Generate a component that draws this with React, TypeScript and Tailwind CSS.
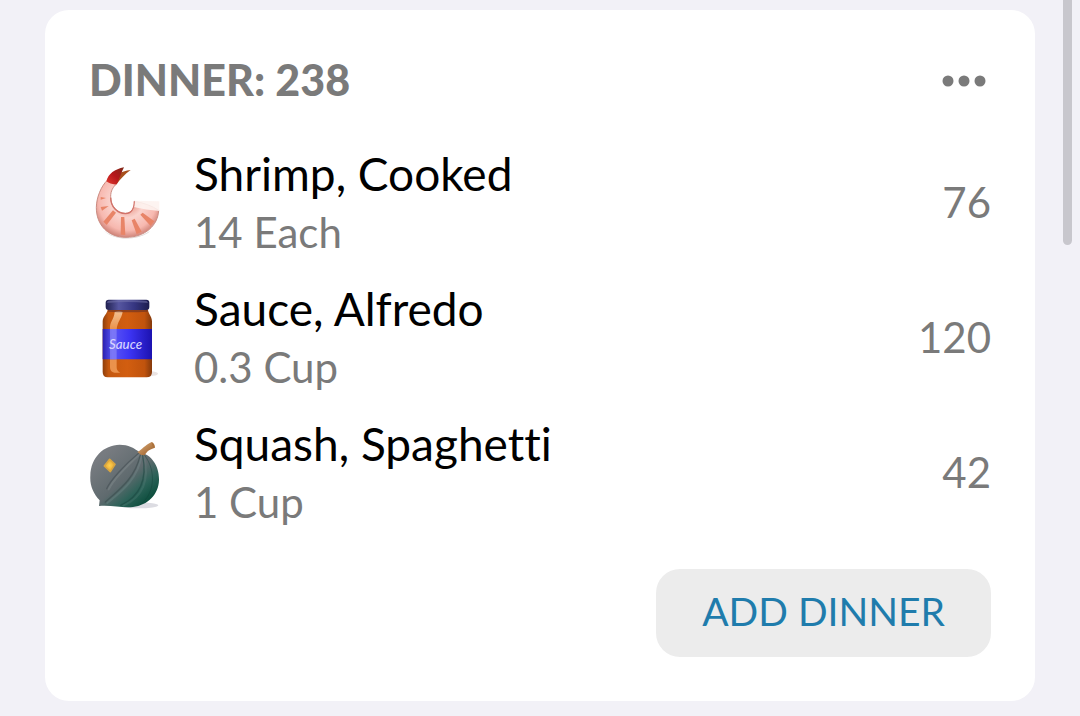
import type { ReactNode } from "react";

function ShrimpIcon() {
  return (
    <svg viewBox="30 24 210 240" className="h-20 w-[70px]" aria-hidden="true">
      <defs>
        <radialGradient id="shrimp-body" gradientUnits="userSpaceOnUse" cx="142" cy="140" r="108">
          <stop offset="0.25" stopColor="#efaba0" />
          <stop offset="0.45" stopColor="#fad3cd" />
          <stop offset="0.8" stopColor="#f7b8af" />
          <stop offset="1" stopColor="#cf8378" />
        </radialGradient>
        <linearGradient id="shrimp-tail" x1="0" y1="1" x2="1" y2="0">
          <stop offset="0" stopColor="#e0392f" />
          <stop offset="0.5" stopColor="#b5161a" />
          <stop offset="1" stopColor="#7d2a18" />
        </linearGradient>
        <clipPath id="shrimp-clip">
          <path d="M82 76 C64 92 49 128 49 158 C49 210 84 247 138 247 C194 247 234 212 236 166 C216 152 188 143 164 139 C164 158 156 174 136 175 C110 174 92 154 92 124 C92 108 99 96 110 86 Z" />
        </clipPath>
      </defs>
      <path d="M66 222 C96 254 166 258 210 228 L204 234 C160 259 98 257 66 222" fill="#d9d2d0" />
      <path
        d="M82 76 C64 92 49 128 49 158 C49 210 84 247 138 247 C194 247 234 212 236 166 C216 152 188 143 164 139 C164 158 156 174 136 175 C110 174 92 154 92 124 C92 108 99 96 110 86 Z"
        fill="url(#shrimp-body)"
        stroke="#cb8c82"
        strokeWidth="3"
      />
      <g clipPath="url(#shrimp-clip)" fill="#e88467">
        <path d="M62 126 L78 129 L62 134 Z" />
        <path d="M62 156 L86 153 L66 167 Z" />
        <path d="M99 166 L108 173 L80 210 L70 200 Z" />
        <path d="M123 186 L133 186 L136 240 L122 239 Z" />
        <path d="M155 196 L164 191 L185 230 L170 238 Z" />
        <path d="M181 179 L188 173 L223 199 L212 213 Z" />
      </g>
      <path d="M163 137 L238 139 L238 168 C212 166 184 162 161 156 Z" fill="#fdf3ef" opacity="0.9" />
      <path d="M163 139 C163 160 154 176 136 176 C112 175 92 156 92 128" fill="none" stroke="#d3736a" strokeWidth="4" />
      <path d="M95 84 C101 62 122 48 152 45 C134 58 120 73 110 88 Z" fill="#a8501c" />
      <path d="M79 79 C85 56 104 43 132 37 C124 52 121 67 110 88 C98 89 88 86 79 79 Z" fill="url(#shrimp-tail)" />
    </svg>
  );
}

function SauceIcon() {
  return (
    <svg viewBox="30 24 210 240" className="h-20 w-[70px]" aria-hidden="true">
      <defs>
        <linearGradient id="jar-glass" x1="0" x2="1">
          <stop offset="0" stopColor="#8e3f0c" />
          <stop offset="0.12" stopColor="#c4580f" />
          <stop offset="0.5" stopColor="#d25e10" />
          <stop offset="0.85" stopColor="#c0530d" />
          <stop offset="1" stopColor="#84390b" />
        </linearGradient>
        <linearGradient id="jar-label" x1="0" x2="1">
          <stop offset="0" stopColor="#2a1fb0" />
          <stop offset="0.2" stopColor="#5a55f5" />
          <stop offset="0.55" stopColor="#3c34f2" />
          <stop offset="1" stopColor="#1c12b0" />
        </linearGradient>
        <linearGradient id="jar-lid" x1="0" x2="1">
          <stop offset="0" stopColor="#20204f" />
          <stop offset="0.3" stopColor="#5656a0" />
          <stop offset="0.65" stopColor="#363682" />
          <stop offset="1" stopColor="#1c1c4e" />
        </linearGradient>
        <linearGradient id="jar-shine" x1="0" x2="0" y1="0" y2="1">
          <stop offset="0" stopColor="#ffe2bd" />
          <stop offset="1" stopColor="#f7a45c" />
        </linearGradient>
      </defs>
      <ellipse cx="188" cy="251" rx="46" ry="9" fill="#eae3e2" />
      <path d="M84 50 H203 C203 74 216 76 216 94 V246 Q216 262 200 262 H83 Q68 262 68 246 V94 C68 76 84 74 84 50 Z" fill="url(#jar-glass)" />
      <path d="M104 66 Q118 60 128 66 C124 88 112 94 110 119 H90 C88 94 102 90 104 66 Z" fill="url(#jar-shine)" opacity="0.75" />
      <path d="M90 208 H110 V232 Q110 244 121 248 H103 Q90 246 90 232 Z" fill="#f6a561" opacity="0.75" />
      <path d="M68 117 H216 V208 H68 Z" fill="url(#jar-label)" />
      <path d="M90 117 H110 V208 H90 Z" fill="#918df8" opacity="0.6" />
      <text x="87" y="176" fontSize="40" fontWeight="500" fontStyle="italic" fontFamily="Lato, sans-serif" fill="#d6d4ff">
        Sauce
      </text>
      <rect x="77" y="29" width="131" height="31" rx="9" fill="url(#jar-lid)" />
      <path d="M84 33 Q142 27 200 33 L204 39 Q142 33 80 39 Z" fill="#7979b2" opacity="0.5" />
      <path d="M84 60 H203 V65 Q142 69 84 65 Z" fill="#642e24" opacity="0.6" />
    </svg>
  );
}

function SquashIcon() {
  return (
    <svg viewBox="30 9 210 240" className="h-20 w-[70px]" aria-hidden="true">
      <defs>
        <linearGradient id="squash-body" x1="0.2" y1="0.15" x2="0.9" y2="0.9">
          <stop offset="0" stopColor="#777b80" />
          <stop offset="0.5" stopColor="#5f6a6e" />
          <stop offset="0.74" stopColor="#2c6258" />
          <stop offset="1" stopColor="#064a38" />
        </linearGradient>
        <radialGradient id="squash-spot">
          <stop offset="0" stopColor="#ffd14f" />
          <stop offset="0.7" stopColor="#edb23a" />
          <stop offset="1" stopColor="#c49c49" />
        </radialGradient>
        <linearGradient id="squash-stem" x1="0" y1="0" x2="1" y2="1">
          <stop offset="0" stopColor="#e0b07c" />
          <stop offset="1" stopColor="#925522" />
        </linearGradient>
      </defs>
      <ellipse cx="175" cy="226" rx="60" ry="9" fill="#dcdce2" />
      <path
        d="M57 228 L59 211 C40 190 29 166 31 137 C32 82 71 45 119 44 C145 44 163 54 179 67 C216 74 238 110 237 150 C236 193 203 226 159 231 C125 234 96 225 57 228 Z"
        fill="url(#squash-body)"
      />
      <g fill="none" strokeLinecap="round">
        <path d="M80 176 C92 150 132 106 177 69" stroke="#454f54" strokeWidth="4" opacity="0.6" />
        <path d="M86 178 C98 154 138 110 180 72" stroke="#929a9d" strokeWidth="6" opacity="0.3" />
        <path d="M76 216 C108 186 164 150 181 75" stroke="#38484b" strokeWidth="4" opacity="0.55" />
        <path d="M82 219 C116 190 172 154 185 76" stroke="#7f9a9a" strokeWidth="6" opacity="0.25" />
        <path d="M122 226 C164 206 206 166 188 76" stroke="#1c453f" strokeWidth="4" opacity="0.55" />
        <path d="M130 227 C172 208 214 168 192 77" stroke="#6c928b" strokeWidth="6" opacity="0.2" />
        <path d="M180 224 C222 196 232 126 194 76" stroke="#123f36" strokeWidth="3" opacity="0.4" />
      </g>
      <path d="M89 88 L105 103 L91 125 L73 108 Z" fill="url(#squash-spot)" stroke="#d8a540" strokeWidth="5" strokeLinejoin="round" />
      <path d="M172 66 C185 61 195 44 215 36 L225 53 C207 58 200 65 194 76 Q182 77 172 66 Z" fill="url(#squash-stem)" />
      <path d="M215 36 Q224 39 225 53 Q215 51 215 36 Z" fill="#ad723b" />
    </svg>
  );
}

type Food = { name: string; amount: string; calories: number; icon: ReactNode };

const foods: Food[] = [
  { name: "Shrimp, Cooked", amount: "14 Each", calories: 76, icon: <ShrimpIcon /> },
  { name: "Sauce, Alfredo", amount: "0.3 Cup", calories: 120, icon: <SauceIcon /> },
  { name: "Squash, Spaghetti", amount: "1 Cup", calories: 42, icon: <SquashIcon /> },
];

export default function App() {
  return (
    <main className="relative min-h-screen bg-[#f2f1f7] px-[45px] pt-[10px] pb-4 font-[Lato,sans-serif] [font-variant-ligatures:none]">
      <section className="rounded-3xl bg-white px-11 pt-11 pb-11" aria-labelledby="dinner-heading">
        <header className="flex h-[52px] items-center justify-between">
          <h1 id="dinner-heading" className="text-[43px] leading-[52px] font-black text-[#7a7a7a]">
            DINNER: 238
          </h1>
          <button type="button" aria-label="Dinner options" className="p-1 text-[#7a7a7a]">
            <svg viewBox="0 0 45 14" className="h-[14px] w-[45px]" fill="currentColor" aria-hidden="true">
              <circle cx="6" cy="8" r="5.5" />
              <circle cx="22" cy="8" r="5.5" />
              <circle cx="38" cy="8" r="5.5" />
            </svg>
          </button>
        </header>

        <ul className="mt-[29px]">
          {foods.map((food) => (
            <li key={food.name} className="flex h-[135px] items-center pl-px">
              {food.icon}
              <div className="ml-[34px] flex-1">
                <p className="text-[46px] leading-[59px] text-black">{food.name}</p>
                <p className="text-[42px] leading-[59px] text-[#7a7a7a]">{food.amount}</p>
              </div>
              <span className="text-[42px] leading-[59px] text-[#7a7a7a]">{food.calories}</span>
            </li>
          ))}
        </ul>

        <div className="mt-[29px] flex justify-end">
          <button type="button" className="h-[88px] rounded-3xl bg-[#ececec] px-[46px] pb-1 text-[39px] leading-none text-[#1f7cac]">
            ADD DINNER
          </button>
        </div>
      </section>

      <div className="absolute top-0 right-2 h-[245px] w-[9px] rounded-b-full bg-[#c8c7cd]" aria-hidden="true" />
    </main>
  );
}
